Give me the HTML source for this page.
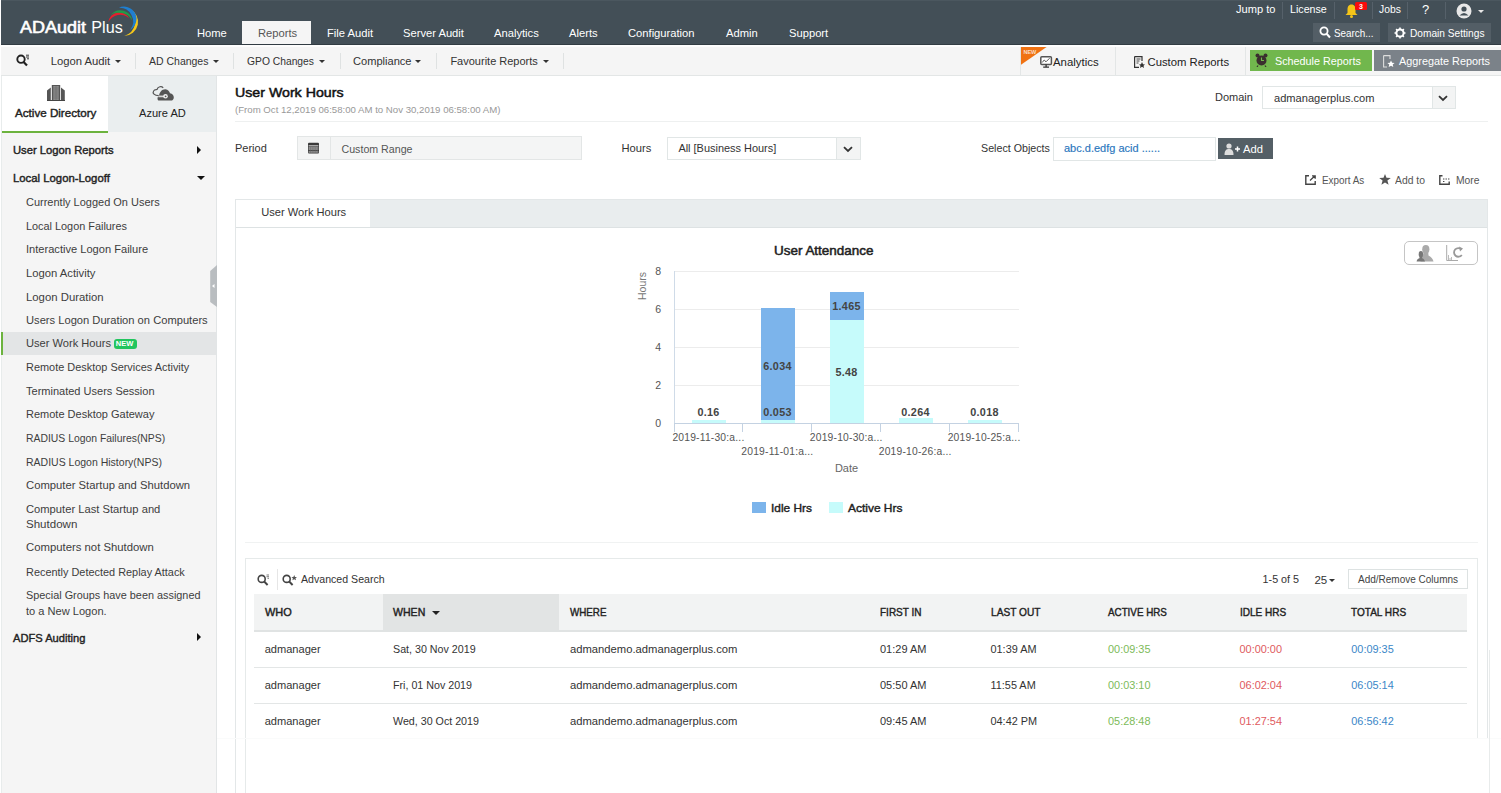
<!DOCTYPE html>
<html><head><meta charset="utf-8"><style>
html,body{margin:0;padding:0;}
body{width:1501px;height:793px;position:relative;overflow:hidden;background:#fff;font-family:"Liberation Sans", sans-serif;}
.t{position:absolute;white-space:nowrap;line-height:20px;height:20px;}
</style></head><body>
<div style="position:absolute;left:0px;top:0px;width:1501px;height:45px;background:#434f57;"></div><div style="position:absolute;left:0px;top:0px;width:1501px;height:1px;background:#4b575f;"></div><div class="t" style="left:20px;top:18.00px;font-size:16.8px;color:#fff;font-weight:normal;-webkit-text-stroke:0.6px #fff;transform:scaleX(1.0709);transform-origin:left center;">ADAudit</div><div class="t" style="left:91.3px;top:17.00px;font-size:16.19px;color:#fff;font-weight:normal;">Plus</div><svg style="position:absolute;left:0;top:0" width="150" height="45" viewBox="0 0 150 45">
<path d="M108.4,22.2 A10.9,10.9 0 0 1 129.1,18.5 A12.8,12.8 0 0 0 108.4,22.2Z" fill="#e2202e"/>
<path d="M110.8,15 A12.1,12.1 0 0 1 132.4,20.8 A15.3,15.3 0 0 0 110.8,15Z" fill="#23994a"/>
<path d="M130,9.2 A14,14 0 0 1 124.2,35.9 A15.6,15.6 0 0 0 130,9.2Z" fill="#f5c71a"/>
<path d="M118.5,7.9 A12.4,12.4 0 0 1 130.3,29.7 A13.6,13.6 0 0 0 118.5,7.9Z" fill="#1f7fd0"/>
</svg><div style="position:absolute;left:242px;top:21px;width:69px;height:24px;background:#f5f5f5;"></div><div class="t" style="left:197px;top:23.00px;font-size:11.2px;color:#fff;font-weight:normal;">Home</div><div class="t" style="left:258px;top:23.00px;font-size:11.2px;color:#555;font-weight:normal;">Reports</div><div class="t" style="left:327px;top:23.00px;font-size:11.2px;color:#fff;font-weight:normal;">File Audit</div><div class="t" style="left:403px;top:23.00px;font-size:11.2px;color:#fff;font-weight:normal;">Server Audit</div><div class="t" style="left:494px;top:23.00px;font-size:11.2px;color:#fff;font-weight:normal;">Analytics</div><div class="t" style="left:569px;top:23.00px;font-size:11.2px;color:#fff;font-weight:normal;">Alerts</div><div class="t" style="left:628px;top:23.00px;font-size:11.2px;color:#fff;font-weight:normal;">Configuration</div><div class="t" style="left:726px;top:23.00px;font-size:11.2px;color:#fff;font-weight:normal;">Admin</div><div class="t" style="left:789px;top:23.00px;font-size:11.2px;color:#fff;font-weight:normal;">Support</div><div class="t" style="left:1236px;top:-1.00px;font-size:11.1px;color:#fff;font-weight:normal;">Jump to</div><div class="t" style="left:1290px;top:-1.00px;font-size:10.68px;color:#fff;font-weight:normal;">License</div><div class="t" style="left:1379px;top:0.00px;font-size:10.32px;color:#fff;font-weight:normal;">Jobs</div><div class="t" style="left:1422px;top:0.00px;font-size:13px;color:#fff;font-weight:normal;">?</div><div style="position:absolute;left:1282px;top:2px;width:1px;height:17px;background:#56616a;"></div><div style="position:absolute;left:1334px;top:2px;width:1px;height:17px;background:#56616a;"></div><div style="position:absolute;left:1372px;top:2px;width:1px;height:17px;background:#56616a;"></div><div style="position:absolute;left:1407px;top:2px;width:1px;height:17px;background:#56616a;"></div><div style="position:absolute;left:1445px;top:2px;width:1px;height:17px;background:#56616a;"></div><svg style="position:absolute;left:1345px;top:4px" width="13" height="14" viewBox="0 0 13 14"><path d="M6.5 0.5 C3.5 0.5 2.5 3 2.5 5.5 L2.5 9 L0.5 11 L12.5 11 L10.5 9 L10.5 5.5 C10.5 3 9.5 0.5 6.5 0.5Z" fill="#f5c518"/><circle cx="6.5" cy="12.5" r="1.5" fill="#f5c518"/></svg><div style="position:absolute;left:1355px;top:1.5px;width:12px;height:8px;background:#f80c0c;border-radius:1.5px;"></div><div class="t" style="left:1061px;width:600px;text-align:center;top:-3.00px;font-size:7px;color:#fff;font-weight:bold;">3</div><svg style="position:absolute;left:1456px;top:3px" width="16" height="16" viewBox="0 0 16 16"><circle cx="8" cy="8" r="7.5" fill="#e8e8e8"/><circle cx="8" cy="6" r="2.6" fill="#434f57"/><path d="M3.5 12.5 Q8 7.5 12.5 12.5 Z" fill="#434f57"/></svg><div style="position:absolute;left:1478px;top:10px;width:0;height:0;border-left:3.5px solid transparent;border-right:3.5px solid transparent;border-top:3.5px solid #e8e8e8"></div><div style="position:absolute;left:1313px;top:23px;width:67px;height:19px;background:#535e66;"></div><div style="position:absolute;left:1388px;top:23px;width:103px;height:19px;background:#535e66;"></div><svg style="position:absolute;left:1319px;top:26px" width="12" height="13" viewBox="0 0 12 13"><circle cx="5" cy="5" r="3.6" stroke="#fff" stroke-width="1.8" fill="none"/><path d="M7.6 7.8 L11 11.5" stroke="#fff" stroke-width="2"/></svg><div class="t" style="left:1334px;top:23.00px;font-size:10.8px;color:#fff;font-weight:normal;transform:scaleX(0.9139);transform-origin:left center;">Search...</div><svg style="position:absolute;left:1394px;top:27px" width="12" height="12" viewBox="0 0 12 12"><circle cx="6" cy="6" r="3.6" stroke="#fff" stroke-width="2" fill="none"/><g stroke="#fff" stroke-width="1.6"><path d="M6 0.5V2.5M6 9.5V11.5M0.5 6H2.5M9.5 6H11.5M2.1 2.1L3.5 3.5M8.5 8.5L9.9 9.9M2.1 9.9L3.5 8.5M8.5 3.5L9.9 2.1"/></g></svg><div class="t" style="left:1410px;top:23.00px;font-size:10.8px;color:#fff;font-weight:normal;transform:scaleX(0.9402);transform-origin:left center;">Domain Settings</div><div style="position:absolute;left:0px;top:45px;width:1501px;height:31px;background:#f5f5f5;border-bottom:1px solid #e3e6e6;box-sizing:border-box;"></div><div style="position:absolute;left:0px;top:45px;width:1501px;height:2px;background:#fdfdfd;"></div><div style="position:absolute;left:0px;top:44px;width:1501px;height:1px;background:#323c43;"></div><svg style="position:absolute;left:16px;top:54px" width="14" height="13" viewBox="0 0 14 13"><circle cx="5" cy="5.2" r="3.7" stroke="#222" stroke-width="1.9" fill="none"/><path d="M7.6 8 L11 11.6" stroke="#222" stroke-width="2.2"/><path d="M10 1.2h3M10 3h3M11 4.8h2" stroke="#222" stroke-width="0.9"/></svg><div class="t" style="left:50.8px;top:51.00px;font-size:11.26px;color:#333;font-weight:normal;">Logon Audit</div><div style="position:absolute;left:114.5px;top:60px;width:0;height:0;border-left:3.5px solid transparent;border-right:3.5px solid transparent;border-top:3.5px solid #333"></div><div class="t" style="left:149px;top:52.00px;font-size:10.49px;color:#333;font-weight:normal;">AD Changes</div><div style="position:absolute;left:212.5px;top:60px;width:0;height:0;border-left:3.5px solid transparent;border-right:3.5px solid transparent;border-top:3.5px solid #333"></div><div class="t" style="left:247px;top:52.00px;font-size:10.3px;color:#333;font-weight:normal;">GPO Changes</div><div style="position:absolute;left:319px;top:60px;width:0;height:0;border-left:3.5px solid transparent;border-right:3.5px solid transparent;border-top:3.5px solid #333"></div><div class="t" style="left:353px;top:51.00px;font-size:11.08px;color:#333;font-weight:normal;">Compliance</div><div style="position:absolute;left:415px;top:60px;width:0;height:0;border-left:3.5px solid transparent;border-right:3.5px solid transparent;border-top:3.5px solid #333"></div><div class="t" style="left:450.4px;top:51.00px;font-size:11.01px;color:#333;font-weight:normal;">Favourite Reports</div><div style="position:absolute;left:542.5px;top:60px;width:0;height:0;border-left:3.5px solid transparent;border-right:3.5px solid transparent;border-top:3.5px solid #333"></div><div style="position:absolute;left:135px;top:53px;width:1px;height:16px;background:#dfe2e2;"></div><div style="position:absolute;left:233px;top:53px;width:1px;height:16px;background:#dfe2e2;"></div><div style="position:absolute;left:340px;top:53px;width:1px;height:16px;background:#dfe2e2;"></div><div style="position:absolute;left:436px;top:53px;width:1px;height:16px;background:#dfe2e2;"></div><div style="position:absolute;left:563px;top:53px;width:1px;height:16px;background:#dfe2e2;"></div><div style="position:absolute;left:1020px;top:47px;width:1px;height:28px;background:#e3e6e6;"></div><div style="position:absolute;left:1115px;top:47px;width:1px;height:28px;background:#e3e6e6;"></div><div style="position:absolute;left:1245px;top:47px;width:1px;height:28px;background:#e3e6e6;"></div><svg style="position:absolute;left:1020.5px;top:47px" width="26" height="18" viewBox="0 0 26 18"><path d="M0 0 H25.6 L0 17.8 Z" fill="#f07212"/><text x="2.6" y="6.8" font-family="Liberation Sans" font-size="5.6" font-weight="bold" fill="#f8dcc4" letter-spacing="-0.2">NEW</text></svg><svg style="position:absolute;left:1039.5px;top:56px" width="13" height="12" viewBox="0 0 13 12"><rect x="0.8" y="0.8" width="10.6" height="7.6" rx="1" stroke="#555" stroke-width="1.5" fill="#fff"/><path d="M2.2 6.5 L4.2 4 L6 5.8 L9.6 2.2" stroke="#444" stroke-width="0.9" fill="none"/><path d="M6.1 8.5v2M3.2 11.2h5.8" stroke="#333" stroke-width="1.3"/></svg><div class="t" style="left:1053px;top:52.00px;font-size:11.4px;color:#222;font-weight:normal;">Analytics</div><svg style="position:absolute;left:1134px;top:56px" width="11" height="12" viewBox="0 0 11 12"><path d="M0.6 0.6H8V5M0.6 0.6V11.4H5" stroke="#333" stroke-width="1.2" fill="none"/><path d="M2.5 3h4M2.5 5h3M2.5 7h2" stroke="#333" stroke-width="0.9"/><path d="M8 6 L9 8.2 L11 8.4 L9.5 9.8 L10 12 L8 10.8 L6 12 L6.5 9.8 L5 8.4 L7 8.2Z" fill="#333"/></svg><div class="t" style="left:1147.5px;top:52.00px;font-size:11.3px;color:#222;font-weight:normal;">Custom Reports</div><div style="position:absolute;left:1250px;top:49.5px;width:121.5px;height:21px;background:#71b74d;"></div><svg style="position:absolute;left:1255px;top:53px" width="13" height="14" viewBox="0 0 13 14"><circle cx="6.5" cy="7.5" r="5" fill="#3a2e2e"/><circle cx="2.5" cy="2.5" r="2" fill="#3a2e2e"/><circle cx="10.5" cy="2.5" r="2" fill="#3a2e2e"/><path d="M6.5 4.5V7.5H9" stroke="#71b74d" stroke-width="1.1" fill="none"/><path d="M3 12.5L2 14M10 12.5L11 14" stroke="#3a2e2e" stroke-width="1.2"/></svg><div class="t" style="left:1275px;top:51.00px;font-size:10.8px;color:#fff;font-weight:normal;">Schedule Reports</div><div style="position:absolute;left:1374px;top:49.5px;width:127px;height:21px;background:#7b8289;"></div><svg style="position:absolute;left:1383px;top:55px" width="12" height="13" viewBox="0 0 12 13"><path d="M0.6 0.6H7V4M0.6 0.6V12H4" stroke="#ddd" stroke-width="1.1" fill="none"/><path d="M8 5.5 L9.1 7.8 L11.6 8 L9.7 9.6 L10.3 12 L8 10.7 L5.7 12 L6.3 9.6 L4.4 8 L6.9 7.8Z" fill="#fff"/></svg><div class="t" style="left:1399px;top:51.00px;font-size:10.85px;color:#fff;font-weight:normal;">Aggregate Reports</div><div style="position:absolute;left:0px;top:76px;width:217px;height:717px;background:#f5f5f5;border-right:1px solid #e2e5e6;box-sizing:border-box;"></div><div style="position:absolute;left:1px;top:76px;width:1px;height:717px;background:#e8ecec;"></div><div style="position:absolute;left:108px;top:76px;width:108px;height:56px;background:#eaeeef;"></div><div style="position:absolute;left:2px;top:76px;width:106px;height:55px;background:#fff;"></div><div style="position:absolute;left:2px;top:130.5px;width:106px;height:2.5px;background:#6cb33e;"></div><svg style="position:absolute;left:47px;top:85px" width="18" height="16" viewBox="0 0 18 16"><path d="M0 16 L0 5.5 L3.8 2.5 L3.8 16Z" fill="#555"/><path d="M14 2.5 L17.8 5.5 L17.8 16 L14 16Z" fill="#555"/><rect x="4.8" y="0" width="8.4" height="16" fill="#555"/><rect x="6.2" y="1" width="5.6" height="14" fill="#8c8c8c"/><path d="M6.2 3h5.6M6.2 5h5.6M6.2 7h5.6M6.2 9h5.6M6.2 11h5.6M6.2 13h5.6" stroke="#6a6a6a" stroke-width="0.6"/><path d="M9 1v14" stroke="#6a6a6a" stroke-width="0.6"/><rect x="-0.5" y="15" width="19" height="1.2" fill="#444"/></svg><div class="t" style="left:14.7px;top:103.00px;font-size:11.2px;color:#222;font-weight:normal;-webkit-text-stroke:0.4px #222;transform:scaleX(1.0393);transform-origin:left center;">Active Directory</div><svg style="position:absolute;left:148px;top:82px" width="30" height="22" viewBox="0 0 30 22"><path d="M11.5,13.6 C6,13.8 4.2,11 5.6,9 C6.5,7.5 8,7.8 9,7.5 C10,4.5 13.5,3.8 15.2,5.8" stroke="#555" stroke-width="1.2" fill="none"/><path d="M11,18.6 C9,18.6 9,14.5 11,14 C11.5,10 14,7.1 17.5,7.3 C20,7.6 21.5,9.5 22,11.3 C24.5,11.6 25.8,13.8 25.8,15.5 C25.8,17.5 24.5,18.6 23,18.6Z" fill="#555"/><path d="M10.3,14.4 H17" stroke="#d8d8d8" stroke-width="1.7"/><circle cx="17.5" cy="14.3" r="2.3" fill="#eee"/><circle cx="17.6" cy="14.3" r="0.9" fill="#555"/></svg><div class="t" style="left:139px;top:103.00px;font-size:11.1px;color:#222;font-weight:normal;">Azure AD</div><div class="t" style="left:12.7px;top:140.00px;font-size:11.2px;color:#222;font-weight:normal;-webkit-text-stroke:0.4px #222;transform:scaleX(1.0037);transform-origin:left center;">User Logon Reports</div><div style="position:absolute;left:197px;top:145.5px;width:0;height:0;border-top:4px solid transparent;border-bottom:4px solid transparent;border-left:4.5px solid #111"></div><div class="t" style="left:12.7px;top:168.00px;font-size:11.2px;color:#222;font-weight:normal;-webkit-text-stroke:0.4px #222;transform:scaleX(1.0126);transform-origin:left center;">Local Logon-Logoff</div><div style="position:absolute;left:196.5px;top:175.5px;width:0;height:0;border-left:4.0px solid transparent;border-right:4.0px solid transparent;border-top:4.5px solid #111"></div><div style="position:absolute;left:1px;top:332px;width:215px;height:23px;background:#e3e5e6;"></div><div style="position:absolute;left:1px;top:332px;width:2px;height:23px;background:#6cb33e;"></div><div class="t" style="left:26px;top:192.00px;font-size:10.99px;color:#3d3d3d;font-weight:normal;">Currently Logged On Users</div><div class="t" style="left:26px;top:216.00px;font-size:10.89px;color:#3d3d3d;font-weight:normal;">Local Logon Failures</div><div class="t" style="left:26px;top:239.00px;font-size:11.1px;color:#3d3d3d;font-weight:normal;">Interactive Logon Failure</div><div class="t" style="left:26px;top:263.00px;font-size:11.25px;color:#3d3d3d;font-weight:normal;">Logon Activity</div><div class="t" style="left:26px;top:287.00px;font-size:11.35px;color:#3d3d3d;font-weight:normal;">Logon Duration</div><div class="t" style="left:26px;top:310.00px;font-size:11.16px;color:#3d3d3d;font-weight:normal;">Users Logon Duration on Computers</div><div class="t" style="left:26px;top:333.00px;font-size:11.12px;color:#3d3d3d;font-weight:normal;">User Work Hours</div><div class="t" style="left:26px;top:357.00px;font-size:10.93px;color:#3d3d3d;font-weight:normal;">Remote Desktop Services Activity</div><div class="t" style="left:26px;top:381.00px;font-size:11.03px;color:#3d3d3d;font-weight:normal;">Terminated Users Session</div><div class="t" style="left:26px;top:404.00px;font-size:11.0px;color:#3d3d3d;font-weight:normal;">Remote Desktop Gateway</div><div class="t" style="left:26px;top:429.00px;font-size:10.4px;color:#3d3d3d;font-weight:normal;">RADIUS Logon Failures(NPS)</div><div class="t" style="left:26px;top:452.00px;font-size:10.5px;color:#3d3d3d;font-weight:normal;">RADIUS Logon History(NPS)</div><div class="t" style="left:26px;top:475.00px;font-size:11.27px;color:#3d3d3d;font-weight:normal;">Computer Startup and Shutdown</div><div class="t" style="left:26px;top:499.00px;font-size:11.2px;color:#3d3d3d;font-weight:normal;">Computer Last Startup and</div><div class="t" style="left:26px;top:514.00px;font-size:11.56px;color:#3d3d3d;font-weight:normal;">Shutdown</div><div class="t" style="left:26px;top:537.00px;font-size:11.34px;color:#3d3d3d;font-weight:normal;">Computers not Shutdown</div><div class="t" style="left:26px;top:562.00px;font-size:10.92px;color:#3d3d3d;font-weight:normal;">Recently Detected Replay Attack</div><div class="t" style="left:26px;top:585.00px;font-size:10.87px;color:#3d3d3d;font-weight:normal;">Special Groups have been assigned</div><div class="t" style="left:26px;top:601.00px;font-size:11.08px;color:#3d3d3d;font-weight:normal;">to a New Logon.</div><div style="position:absolute;left:114px;top:338.5px;width:22.5px;height:10px;background:#22c55e;border-radius:3px;"></div><div class="t" style="left:-175.5px;width:600px;text-align:center;top:334.00px;font-size:7.5px;color:#fff;font-weight:bold;">NEW</div><div class="t" style="left:12.7px;top:628.00px;font-size:11.2px;color:#222;font-weight:normal;-webkit-text-stroke:0.4px #222;transform:scaleX(0.9940);transform-origin:left center;">ADFS Auditing</div><div style="position:absolute;left:197px;top:633px;width:0;height:0;border-top:4px solid transparent;border-bottom:4px solid transparent;border-left:4.5px solid #111"></div><svg style="position:absolute;left:209px;top:265px" width="8" height="42" viewBox="0 0 8 42"><path d="M8 0 L8 42 L1.2 37 L1.2 6 Z" fill="#b9bdc0"/><path d="M3 21 L5.5 19 L5.5 23Z" fill="#fff"/></svg><div class="t" style="left:235px;top:83.00px;font-size:13.3px;color:#111;font-weight:normal;-webkit-text-stroke:0.5px #111;transform:scaleX(1.0665);transform-origin:left center;">User Work Hours</div><div class="t" style="left:235px;top:100.00px;font-size:9.65px;color:#999;font-weight:normal;">(From Oct 12,2019 06:58:00 AM to Nov 30,2019 06:58:00 AM)</div><div style="position:absolute;left:235px;top:121px;width:1253px;height:1px;background:#eef0f0;"></div><div class="t" style="left:1215px;top:87.00px;font-size:11px;color:#333;font-weight:normal;">Domain</div><div style="position:absolute;left:1262px;top:85.5px;width:194px;height:23px;background:#fff;border:1px solid #e1e6e6;box-sizing:border-box;"></div><div style="position:absolute;left:1431.5px;top:86.5px;width:23.5px;height:21px;background:#f3f4f4;border-left:1px solid #e1e6e6;box-sizing:border-box;"></div><svg style="position:absolute;left:1438px;top:94.5px" width="10" height="7" viewBox="0 0 10 7"><path d="M1 1.2 L5 5 L9 1.2" stroke="#333" stroke-width="1.8" fill="none"/></svg><div class="t" style="left:1274px;top:88.00px;font-size:11.1px;color:#333;font-weight:normal;">admanagerplus.com</div><div class="t" style="left:235px;top:138.00px;font-size:11px;color:#333;font-weight:normal;">Period</div><div style="position:absolute;left:297px;top:136px;width:284.5px;height:24px;background:#f4f5f5;border:1px solid #e3e6e6;box-sizing:border-box;"></div><div style="position:absolute;left:330px;top:136px;width:1px;height:24px;background:#e3e6e6;"></div><svg style="position:absolute;left:308px;top:142px" width="11" height="12" viewBox="0 0 11 12"><rect x="0" y="0.8" width="11" height="10.8" rx="1" fill="#3a3a3a"/><rect x="0.6" y="3.2" width="9.8" height="1.2" fill="#c4c4c4"/><rect x="0.6" y="5" width="9.8" height="3" fill="#8d8d8d"/><rect x="0.6" y="8.8" width="9.8" height="2" fill="#8d8d8d"/><path d="M2.6 5v6M4.9 5v6M7.2 5v6M9.3 5v6" stroke="#666" stroke-width="0.5"/></svg><div class="t" style="left:341.5px;top:139.00px;font-size:10.65px;color:#555;font-weight:normal;">Custom Range</div><div class="t" style="left:621.4px;top:138.00px;font-size:11.2px;color:#333;font-weight:normal;">Hours</div><div style="position:absolute;left:667px;top:136.5px;width:194px;height:23px;background:#fff;border:1px solid #e1e6e6;box-sizing:border-box;"></div><div style="position:absolute;left:835.5px;top:137.5px;width:24.5px;height:21px;background:#f3f4f4;border-left:1px solid #e1e6e6;box-sizing:border-box;"></div><svg style="position:absolute;left:843px;top:146px" width="10" height="7" viewBox="0 0 10 7"><path d="M1 1.2 L5 5 L9 1.2" stroke="#333" stroke-width="1.8" fill="none"/></svg><div class="t" style="left:678.4px;top:138.00px;font-size:10.95px;color:#333;font-weight:normal;">All [Business Hours]</div><div class="t" style="left:981px;top:138.00px;font-size:10.7px;color:#333;font-weight:normal;">Select Objects</div><div style="position:absolute;left:1052.5px;top:136.5px;width:163px;height:24px;background:#fff;border:1px solid #e1e6e6;box-sizing:border-box;"></div><div class="t" style="left:1064px;top:138.00px;font-size:11px;color:#2a76bd;font-weight:normal;-webkit-text-stroke:0.15px #2a76bd;">abc.d.edfg acid ......</div><div style="position:absolute;left:1218.4px;top:138px;width:54.4px;height:21px;background:#545f66;"></div><svg style="position:absolute;left:1224px;top:143px" width="16" height="12" viewBox="0 0 16 12"><circle cx="5" cy="3" r="2.6" fill="#ddd"/><path d="M0.5 12 C0.5 7 2.5 6 5 6 C7.5 6 9.5 7 9.5 12Z" fill="#ddd"/><path d="M11 6H16M13.5 3.5V8.5" stroke="#fff" stroke-width="1.5"/></svg><div class="t" style="left:1243px;top:139.00px;font-size:11.2px;color:#fff;font-weight:normal;">Add</div><svg style="position:absolute;left:1305px;top:175px" width="11" height="10" viewBox="0 0 11 10"><path d="M4 0.8H0.8V9.2H10.2V6" stroke="#444" stroke-width="1.4" fill="none"/><path d="M5 5.5L10 0.8M7 0.8H10.2V3.8" stroke="#444" stroke-width="1.3" fill="none"/></svg><div class="t" style="left:1321.6px;top:170.00px;font-size:10.6px;color:#555;font-weight:normal;transform:scaleX(0.9324);transform-origin:left center;">Export As</div><svg style="position:absolute;left:1379px;top:174px" width="12" height="11" viewBox="0 0 12 11"><path d="M6 0 L7.5 3.8 L11.8 4 L8.4 6.6 L9.6 10.8 L6 8.5 L2.4 10.8 L3.6 6.6 L0.2 4 L4.5 3.8Z" fill="#555"/></svg><div class="t" style="left:1394.8px;top:170.00px;font-size:10.6px;color:#555;font-weight:normal;transform:scaleX(0.9789);transform-origin:left center;">Add to</div><svg style="position:absolute;left:1439px;top:175px" width="11" height="10" viewBox="0 0 11 10"><path d="M3.5 0.8H0.8V9.2H10.2V6.5" stroke="#444" stroke-width="1.4" fill="none"/><path d="M4 4h1.4M6.5 4h1.4M9 4h1.4M4 6.5h1.4" stroke="#444" stroke-width="1.2"/></svg><div class="t" style="left:1456px;top:170.00px;font-size:10.6px;color:#555;font-weight:normal;transform:scaleX(0.9730);transform-origin:left center;">More</div><div style="position:absolute;left:235px;top:199px;width:1253px;height:539px;background:#fff;border:1px solid #e3e7e8;border-bottom:none;box-sizing:border-box;"></div><div style="position:absolute;left:235px;top:738px;width:1px;height:55px;background:#e3e7e8;"></div><div style="position:absolute;left:244.5px;top:738px;width:1px;height:55px;background:#e6eaea;"></div><div style="position:absolute;left:236px;top:200px;width:1251px;height:27.5px;background:#e9edee;border-bottom:1px solid #dde2e3;box-sizing:border-box;"></div><div style="position:absolute;left:236px;top:200px;width:134px;height:27px;background:#fff;"></div><div class="t" style="left:261.2px;top:202.00px;font-size:11.11px;color:#333;font-weight:normal;">User Work Hours</div><div style="position:absolute;left:1404px;top:241px;width:73.5px;height:23.5px;border:1.3px solid #c5c5c5;border-radius:5px;box-sizing:border-box;background:#fff;"></div><svg style="position:absolute;left:1404px;top:241px" width="40" height="24" viewBox="0 0 40 24"><ellipse cx="21.8" cy="8.2" rx="3.6" ry="4.3" fill="#aaa"/><path d="M19.5 11 L19 14.5 C17 15.5 16.5 17 16.5 20.6 L29.5 20.6 C29 18 27.5 16 24.5 14.5 L24.2 11Z" fill="#aaa"/><path d="M16.8 19.8 C16.8 17.5 17.6 16.5 16.5 15.5 C15.5 14.5 15.3 11 17.2 10.2" stroke="#fff" stroke-width="1" fill="none"/><ellipse cx="16.9" cy="13.3" rx="2.2" ry="3.2" fill="#777"/><path d="M15.6 15.5 L15.4 17.3 C13.5 18 12.8 19 12.6 20.6 L21 20.6 C20.5 19 19.8 18 18.2 17.3 L18 15.5Z" fill="#777"/></svg><svg style="position:absolute;left:1446px;top:245px" width="20" height="16" viewBox="0 0 20 16"><path d="M0.7 0V15.5H12" stroke="#aaa" stroke-width="1" fill="none"/><path d="M2.5 15V10M4 15v-2M5.5 15v-3" stroke="#aaa" stroke-width="0.8"/><path d="M15.5 4.5 A4.3 4.3 0 1 0 15.8 10" stroke="#999" stroke-width="1.8" fill="none"/><path d="M13 1.5 L17 3.5 L14 6.5Z" fill="#999"/></svg><div class="t" style="left:774.4px;top:241.00px;font-size:12.6px;color:#222;font-weight:normal;-webkit-text-stroke:0.5px #222;transform:scaleX(1.0681);transform-origin:left center;">User Attendance</div><div class="t" style="left:624px;top:277px;width:36px;text-align:center;font-size:10.5px;color:#777;transform:rotate(-90deg);transform-origin:center;line-height:12px;height:12px;top:280px">Hours</div><div class="t" style="left:61px;width:600px;text-align:right;top:413.00px;font-size:10.5px;color:#555;font-weight:normal;">0</div><div style="position:absolute;left:674px;top:384.5px;width:345px;height:1px;background:#ececec;"></div><div class="t" style="left:61px;width:600px;text-align:right;top:375.00px;font-size:10.5px;color:#555;font-weight:normal;">2</div><div style="position:absolute;left:674px;top:346.5px;width:345px;height:1px;background:#ececec;"></div><div class="t" style="left:61px;width:600px;text-align:right;top:337.00px;font-size:10.5px;color:#555;font-weight:normal;">4</div><div style="position:absolute;left:674px;top:308.5px;width:345px;height:1px;background:#ececec;"></div><div class="t" style="left:61px;width:600px;text-align:right;top:299.00px;font-size:10.5px;color:#555;font-weight:normal;">6</div><div style="position:absolute;left:674px;top:270.5px;width:345px;height:1px;background:#ececec;"></div><div class="t" style="left:61px;width:600px;text-align:right;top:261.00px;font-size:10.5px;color:#555;font-weight:normal;">8</div><div style="position:absolute;left:673.5px;top:270.5px;width:1px;height:153px;background:#cfdbe8;"></div><div style="position:absolute;left:673.5px;top:423px;width:345.5px;height:1px;background:#c4d2e2;"></div><div style="position:absolute;left:673.5px;top:423px;width:1px;height:9px;background:#c4d2e2;"></div><div style="position:absolute;left:742.4px;top:423px;width:1px;height:9px;background:#c4d2e2;"></div><div style="position:absolute;left:811.3px;top:423px;width:1px;height:9px;background:#c4d2e2;"></div><div style="position:absolute;left:880.2px;top:423px;width:1px;height:9px;background:#c4d2e2;"></div><div style="position:absolute;left:949.1px;top:423px;width:1px;height:9px;background:#c4d2e2;"></div><div style="position:absolute;left:1018.0px;top:423px;width:1px;height:9px;background:#c4d2e2;"></div><div style="position:absolute;left:692.0px;top:420.0px;width:34px;height:3.0px;background:#c6fbfb;"></div><div style="position:absolute;left:760.9px;top:420px;width:34px;height:3px;background:#c6fbfb;"></div><div style="position:absolute;left:760.9px;top:308.3px;width:34px;height:111.7px;background:#7cb4eb;"></div><div style="position:absolute;left:829.8px;top:319.7px;width:34px;height:103.3px;background:#c6fbfb;"></div><div style="position:absolute;left:829.8px;top:292.1px;width:34px;height:27.6px;background:#7cb4eb;"></div><div style="position:absolute;left:898.7px;top:418.0px;width:34px;height:5.0px;background:#c6fbfb;"></div><div style="position:absolute;left:967.6px;top:420px;width:34px;height:3px;background:#c6fbfb;"></div><div class="t" style="left:408.5px;width:600px;text-align:center;top:402.00px;font-size:10.8px;color:#444;font-weight:bold;letter-spacing:0.3px;">0.16</div><div class="t" style="left:477.5px;width:600px;text-align:center;top:402.00px;font-size:10.8px;color:#444;font-weight:bold;letter-spacing:0.3px;">0.053</div><div class="t" style="left:477.5px;width:600px;text-align:center;top:356.00px;font-size:10.8px;color:#444;font-weight:bold;letter-spacing:0.3px;">6.034</div><div class="t" style="left:546.5px;width:600px;text-align:center;top:296.00px;font-size:10.8px;color:#444;font-weight:bold;letter-spacing:0.3px;">1.465</div><div class="t" style="left:546.5px;width:600px;text-align:center;top:362.00px;font-size:10.8px;color:#444;font-weight:bold;letter-spacing:0.3px;">5.48</div><div class="t" style="left:615.5px;width:600px;text-align:center;top:402.00px;font-size:10.8px;color:#444;font-weight:bold;letter-spacing:0.3px;">0.264</div><div class="t" style="left:684.5px;width:600px;text-align:center;top:402.00px;font-size:10.8px;color:#444;font-weight:bold;letter-spacing:0.3px;">0.018</div><div class="t" style="left:408.45000000000005px;width:600px;text-align:center;top:428.00px;font-size:10.3px;color:#555;font-weight:normal;letter-spacing:0.2px;">2019-11-30:a...</div><div class="t" style="left:477.35px;width:600px;text-align:center;top:442.00px;font-size:10.3px;color:#555;font-weight:normal;letter-spacing:0.2px;">2019-11-01:a...</div><div class="t" style="left:546.25px;width:600px;text-align:center;top:428.00px;font-size:10.3px;color:#555;font-weight:normal;letter-spacing:0.2px;">2019-10-30:a...</div><div class="t" style="left:615.1500000000001px;width:600px;text-align:center;top:442.00px;font-size:10.3px;color:#555;font-weight:normal;letter-spacing:0.2px;">2019-10-26:a...</div><div class="t" style="left:684.0500000000001px;width:600px;text-align:center;top:428.00px;font-size:10.3px;color:#555;font-weight:normal;letter-spacing:0.2px;">2019-10-25:a...</div><div class="t" style="left:546.5px;width:600px;text-align:center;top:458.00px;font-size:11px;color:#666;font-weight:normal;">Date</div><div style="position:absolute;left:752px;top:501.6px;width:14px;height:11px;background:#7cb4eb;"></div><div class="t" style="left:771.2px;top:498.00px;font-size:11.2px;color:#222;font-weight:normal;-webkit-text-stroke:0.4px #222;transform:scaleX(1.0625);transform-origin:left center;">Idle Hrs</div><div style="position:absolute;left:829.3px;top:501.6px;width:14px;height:11px;background:#c6fbfb;"></div><div class="t" style="left:848px;top:498.00px;font-size:11.2px;color:#222;font-weight:normal;-webkit-text-stroke:0.4px #222;transform:scaleX(1.0680);transform-origin:left center;">Active Hrs</div><div style="position:absolute;left:244.6px;top:542px;width:1233px;height:1px;background:#f0f2f2;"></div><div style="position:absolute;left:244.5px;top:558px;width:1233.5px;height:181px;border:1px solid #e6eaea;border-bottom:none;box-sizing:border-box;"></div><svg style="position:absolute;left:257px;top:574px" width="13" height="12" viewBox="0 0 13 12"><circle cx="4.7" cy="4.9" r="3.5" stroke="#444" stroke-width="1.6" fill="none"/><path d="M7.2 7.5 L10.6 11" stroke="#444" stroke-width="1.9"/><path d="M9.5 1h2.5M9.5 2.7h2.5M10.5 4.3h1.5" stroke="#444" stroke-width="0.7"/></svg><div style="position:absolute;left:276.5px;top:569px;width:1px;height:21px;background:#e6e6e6;"></div><svg style="position:absolute;left:282px;top:574px" width="15" height="12" viewBox="0 0 15 12"><circle cx="4.7" cy="4.9" r="3.5" stroke="#444" stroke-width="1.6" fill="none"/><path d="M7.2 7.5 L10.6 11" stroke="#444" stroke-width="1.9"/><path d="M12.2 1 L13 2.9 L15 3 L13.5 4.3 L14 6.2 L12.2 5.2 L10.4 6.2 L10.9 4.3 L9.4 3 L11.4 2.9Z" fill="#555"/></svg><div class="t" style="left:301px;top:569.00px;font-size:10.6px;color:#333;font-weight:normal;">Advanced Search</div><div class="t" style="left:1262.6px;top:569.00px;font-size:10.75px;color:#333;font-weight:normal;">1-5 of 5</div><div class="t" style="left:1314.4px;top:570.00px;font-size:11.5px;color:#333;font-weight:normal;">25</div><div style="position:absolute;left:1329px;top:579px;width:0;height:0;border-left:3.5px solid transparent;border-right:3.5px solid transparent;border-top:3.5px solid #333"></div><div style="position:absolute;left:1347.8px;top:569.3px;width:120px;height:20px;border:1px solid #dde2e2;box-sizing:border-box;background:#fff;"></div><div class="t" style="left:1358px;top:570.00px;font-size:10px;color:#444;font-weight:normal;">Add/Remove Columns</div><div style="position:absolute;left:254px;top:594px;width:1213px;height:38px;background:#f2f3f3;border-bottom:2px solid #e0e3e3;box-sizing:border-box;"></div><div style="position:absolute;left:383px;top:594px;width:176px;height:36px;background:#e2e4e4;"></div><div class="t" style="left:264.7px;top:602.00px;font-size:10.8px;color:#222;font-weight:normal;-webkit-text-stroke:0.4px #222;transform:scaleX(1.0154);transform-origin:left center;">WHO</div><div class="t" style="left:393px;top:602.00px;font-size:10.8px;color:#222;font-weight:normal;-webkit-text-stroke:0.4px #222;transform:scaleX(0.9789);transform-origin:left center;">WHEN</div><div class="t" style="left:570px;top:602.00px;font-size:10.8px;color:#222;font-weight:normal;-webkit-text-stroke:0.4px #222;transform:scaleX(0.9080);transform-origin:left center;">WHERE</div><div class="t" style="left:880px;top:602.00px;font-size:10.8px;color:#222;font-weight:normal;-webkit-text-stroke:0.4px #222;transform:scaleX(0.9263);transform-origin:left center;">FIRST IN</div><div class="t" style="left:990.5px;top:602.00px;font-size:10.8px;color:#222;font-weight:normal;-webkit-text-stroke:0.4px #222;transform:scaleX(0.9408);transform-origin:left center;">LAST OUT</div><div class="t" style="left:1108px;top:602.00px;font-size:10.8px;color:#222;font-weight:normal;-webkit-text-stroke:0.4px #222;transform:scaleX(0.9088);transform-origin:left center;">ACTIVE HRS</div><div class="t" style="left:1239.5px;top:602.00px;font-size:10.8px;color:#222;font-weight:normal;-webkit-text-stroke:0.4px #222;transform:scaleX(0.9295);transform-origin:left center;">IDLE HRS</div><div class="t" style="left:1351.3px;top:602.00px;font-size:10.8px;color:#222;font-weight:normal;-webkit-text-stroke:0.4px #222;transform:scaleX(0.9306);transform-origin:left center;">TOTAL HRS</div><div style="position:absolute;left:432px;top:610.5px;width:0;height:0;border-left:4.0px solid transparent;border-right:4.0px solid transparent;border-top:4.5px solid #222"></div><div class="t" style="left:264.7px;top:639.00px;font-size:11.07px;color:#333;font-weight:normal;">admanager</div><div class="t" style="left:393px;top:639.00px;font-size:10.7px;color:#333;font-weight:normal;">Sat, 30 Nov 2019</div><div class="t" style="left:570px;top:639.00px;font-size:11.24px;color:#333;font-weight:normal;">admandemo.admanagerplus.com</div><div class="t" style="left:880px;top:639.00px;font-size:11.0px;color:#333;font-weight:normal;">01:29 AM</div><div class="t" style="left:990.5px;top:639.00px;font-size:10.9px;color:#333;font-weight:normal;">01:39 AM</div><div class="t" style="left:1108px;top:639.00px;font-size:10.92px;color:#7dbb5a;font-weight:normal;">00:09:35</div><div class="t" style="left:1239.5px;top:639.00px;font-size:10.92px;color:#e05a5e;font-weight:normal;">00:00:00</div><div class="t" style="left:1351.3px;top:639.00px;font-size:10.92px;color:#3b87c8;font-weight:normal;">00:09:35</div><div style="position:absolute;left:254px;top:667px;width:1213px;height:1px;background:#e3e6e6;"></div><div class="t" style="left:264.7px;top:675.00px;font-size:11.07px;color:#333;font-weight:normal;">admanager</div><div class="t" style="left:393px;top:675.00px;font-size:10.7px;color:#333;font-weight:normal;">Fri, 01 Nov 2019</div><div class="t" style="left:570px;top:675.00px;font-size:11.24px;color:#333;font-weight:normal;">admandemo.admanagerplus.com</div><div class="t" style="left:880px;top:675.00px;font-size:11.0px;color:#333;font-weight:normal;">05:50 AM</div><div class="t" style="left:990.5px;top:675.00px;font-size:10.9px;color:#333;font-weight:normal;">11:55 AM</div><div class="t" style="left:1108px;top:675.00px;font-size:10.92px;color:#7dbb5a;font-weight:normal;">00:03:10</div><div class="t" style="left:1239.5px;top:675.00px;font-size:10.92px;color:#e05a5e;font-weight:normal;">06:02:04</div><div class="t" style="left:1351.3px;top:675.00px;font-size:10.92px;color:#3b87c8;font-weight:normal;">06:05:14</div><div style="position:absolute;left:254px;top:703px;width:1213px;height:1px;background:#e3e6e6;"></div><div class="t" style="left:264.7px;top:711.00px;font-size:11.07px;color:#333;font-weight:normal;">admanager</div><div class="t" style="left:393px;top:711.00px;font-size:10.7px;color:#333;font-weight:normal;">Wed, 30 Oct 2019</div><div class="t" style="left:570px;top:711.00px;font-size:11.24px;color:#333;font-weight:normal;">admandemo.admanagerplus.com</div><div class="t" style="left:880px;top:711.00px;font-size:11.0px;color:#333;font-weight:normal;">09:45 AM</div><div class="t" style="left:990.5px;top:711.00px;font-size:10.9px;color:#333;font-weight:normal;">04:42 PM</div><div class="t" style="left:1108px;top:711.00px;font-size:10.92px;color:#7dbb5a;font-weight:normal;">05:28:48</div><div class="t" style="left:1239.5px;top:711.00px;font-size:10.92px;color:#e05a5e;font-weight:normal;">01:27:54</div><div class="t" style="left:1351.3px;top:711.00px;font-size:10.92px;color:#3b87c8;font-weight:normal;">06:56:42</div><div style="position:absolute;left:0px;top:0px;width:1px;height:793px;background:#fff;"></div><div style="position:absolute;left:217px;top:738px;width:1284px;height:1px;background:#fafbfb;"></div><div style="position:absolute;left:1489px;top:650px;width:1px;height:143px;background:#e8ebeb;"></div>
</body></html>
